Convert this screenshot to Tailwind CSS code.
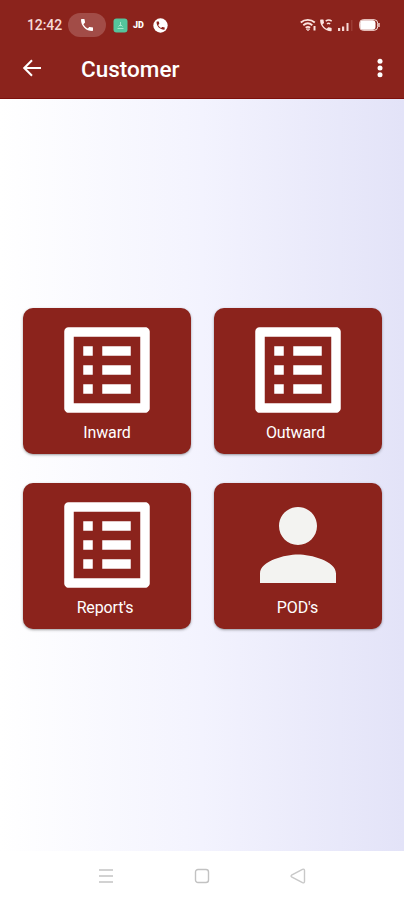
<!DOCTYPE html>
<html lang="en">

<head>
    <meta charset="UTF-8">
    <meta name="viewport" content="width=device-width, initial-scale=1.0">
    <title>Customer</title>
    <script src="https://cdn.jsdelivr.net/npm/@tailwindcss/browser@4"></script>
</head>

<body class="font-[Roboto,sans-serif]">
    <div class="h-[900px] w-[404px] flex flex-col overflow-hidden bg-white">
        <header class="h-[99px] shrink-0 bg-[#8b231c] border-b border-[#7d100c] text-white">
            <!-- Status bar -->
            <div class="h-[50px] pl-[27px] pr-[24px] flex items-center">
                <span class="w-[36px] text-[14px] leading-[20px] font-medium tracking-[-0.1px] whitespace-nowrap text-[#f6dcd8]">12:42</span>
                <span class="ml-[5px] w-[38px] h-[24px] rounded-full bg-[#a24c47] flex items-center justify-center">
                    <svg class="w-4 h-4" viewBox="0 0 24 24" fill="#fff"><path d="M6.62 10.79c1.44 2.83 3.76 5.14 6.59 6.59l2.2-2.2c.27-.27.67-.36 1.02-.24 1.12.37 2.33.57 3.57.57.55 0 1 .45 1 1V20c0 .55-.45 1-1 1C10.61 21 3 13.39 3 4c0-.55.45-1 1-1h3.5c.55 0 1 .45 1 1 0 1.25.2 2.45.57 3.57.11.35.03.74-.25 1.02l-2.2 2.2z"/></svg>
                </span>
                <svg class="ml-[7px] w-[15px] h-[15px]" viewBox="0 0 15 15"><rect x=".5" y=".5" width="14" height="14" rx="3" fill="#55c49c"/><path d="M7.5 4v4M5.5 8.500l2-2 2 2M4.500 10.500h6" stroke="#a5e8cd" fill="none"/></svg>
                <span class="ml-[5px] w-[12px] text-[9px] leading-none font-black">JD</span>
                <svg class="ml-[8px] w-[15px] h-[15px]" viewBox="0 0 24 24"><circle cx="12" cy="12" r="11.500" fill="#fff"/><path transform="translate(3.500 3.500) scale(.72)" fill="#8b231c" d="M6.620 10.790c1.440 2.830 3.760 5.140 6.590 6.590l2.200-2.200c.27-.27.67-.36 1.020-.24 1.120.37 2.330.57 3.570.57.55 0 1 .45 1 1V20c0 .55-.45 1-1 1C10.610 21 3 13.390 3 4c0-.55.45-1 1-1h3.500c.55 0 1 .45 1 1 0 1.250.2 2.450.57 3.570.11.35.03.74-.25 1.020l-2.200 2.200z"/></svg>
                <div class="ml-auto flex items-center">
                    <svg class="w-[17px] h-[14px]" viewBox="0 0 17 14" fill="none" stroke="#fbe3df" stroke-width="1.800"><path d="M.8 4.500c4-3.600 10-3.600 14 0M3.300 7.200c2.800-2.400 6.200-2.400 9 0M5.700 9.800c1.500-1.200 3-1.200 4.400 0"/><path d="M6.500 11h3L8 12.800z" stroke-width="1"/><path d="M14.500 8v4.500" stroke-width="2"/></svg>
                    <svg class="ml-[3px] w-[13px] h-[14px]" viewBox="0 0 13 14"><path transform="translate(-1.800 -.3) scale(.64)" fill="#fbe3df" d="M6.620 10.790c1.440 2.830 3.760 5.140 6.590 6.590l2.200-2.200c.27-.27.67-.36 1.020-.24 1.120.37 2.330.57 3.570.57.55 0 1 .45 1 1V20c0 .55-.45 1-1 1C10.610 21 3 13.390 3 4c0-.55.45-1 1-1h3.500c.55 0 1 .45 1 1 0 1.250.2 2.450.57 3.570.11.35.03.74-.25 1.020l-2.200 2.200z"/><path d="M5.700 3.200c2-1.500 4-1.500 6 0M7 5.800c1-.7 2-.7 3.200 0" stroke="#fbe3df" stroke-width="1.500" fill="none"/></svg>
                    <svg class="ml-[5px] w-[15px] h-[14px]" viewBox="0 0 15 14"><path d="M0 10h2.200v3H0zM4 8.500h2.200V13H4zM8.500 5h2v8h-2z" fill="#f6d8d4"/><path d="M13 2h1.500v11H13z" fill="#9b3b33"/></svg>
                    <svg class="ml-[6px] w-[21px] h-[12px]" viewBox="0 0 21 12"><rect x=".7" y=".7" width="18" height="10.600" rx="3.500" fill="none" stroke="#fbe3df"/><rect x="1.200" y="1.200" width="15.300" height="9.600" rx="3" fill="#fff"/><path d="M20 4v4" stroke="#fbe3df" stroke-width="1.300"/></svg>
                </div>
            </div>

            <!-- App bar -->
            <div class="h-[36px] pl-[21px] pr-[13px] flex items-center">
                <svg class="w-[22px] h-[24px]" viewBox="1 0 22 24" fill="#fff"><path d="M21 10.900H6.830l5.880-5.780L11.300 3.500 2.800 12l8.500 8.500 1.410-1.620L6.830 13.100H21z"/></svg>
                <h1 class="ml-[38px] pt-px text-[22.500px] leading-[26px] font-medium">Customer</h1>
                <svg class="ml-auto w-[22px] h-[24px]" viewBox="0 0 22 24" fill="#fff"><circle cx="11" cy="5.200" r="2.500"/><circle cx="11" cy="12" r="2.500"/><circle cx="11" cy="18.800" r="2.500"/></svg>
            </div>
        </header>

        <main class="flex-1 pt-[209px] px-[23px] bg-linear-to-r from-white via-[#f3f3fe] to-[#e3e3f8]">
            <div class="grid grid-cols-2 gap-x-[23px] gap-y-[29.400px] text-white text-[16px] leading-[20px] tracking-[-0.15px]">
                <a href="#" class="w-[168px] h-[146px] rounded-[10px] bg-[#8b231c] shadow-sm shadow-black/30 flex flex-col items-center pt-[4.500px]">
                    <svg class="w-[114px] h-[114px] shrink-0" viewBox="0 0 24 24" fill="#fff"><path d="M19 5v14H5V5h14m1.100-2H3.900c-.5 0-.9.4-.9.9v16.200c0 .4.4.9.9.9h16.200c.4 0 .9-.5.9-.9V3.900c0-.5-.5-.9-.9-.9zM11 7h6v2h-6V7zm0 4h6v2h-6v-2zm0 4h6v2h-6zM7 7h2v2H7zm0 4h2v2H7zm0 4h2v2H7z"/></svg>
                    <span class="-mt-[4px]">Inward</span>
                </a>
                <a href="#" class="w-[168px] h-[146px] rounded-[10px] bg-[#8b231c] shadow-sm shadow-black/30 flex flex-col items-center pt-[4.500px]">
                    <svg class="w-[114px] h-[114px] shrink-0" viewBox="0 0 24 24" fill="#fff"><path d="M19 5v14H5V5h14m1.100-2H3.900c-.5 0-.9.4-.9.9v16.200c0 .4.4.9.9.9h16.200c.4 0 .9-.5.9-.9V3.900c0-.5-.5-.9-.9-.9zM11 7h6v2h-6V7zm0 4h6v2h-6v-2zm0 4h6v2h-6zM7 7h2v2H7zm0 4h2v2H7zm0 4h2v2H7z"/></svg>
                    <span class="-mt-[4px] pr-[4px]">Outward</span>
                </a>
                <a href="#" class="w-[168px] h-[146px] rounded-[10px] bg-[#8b231c] shadow-sm shadow-black/30 flex flex-col items-center pt-[4.500px]">
                    <svg class="w-[114px] h-[114px] shrink-0" viewBox="0 0 24 24" fill="#fff"><path d="M19 5v14H5V5h14m1.100-2H3.900c-.5 0-.9.4-.9.9v16.200c0 .4.4.9.9.9h16.200c.4 0 .9-.5.9-.9V3.900c0-.5-.5-.9-.9-.9zM11 7h6v2h-6V7zm0 4h6v2h-6v-2zm0 4h6v2h-6zM7 7h2v2H7zm0 4h2v2H7zm0 4h2v2H7z"/></svg>
                    <span class="-mt-[4px] pr-[4px]">Report's</span>
                </a>
                <a href="#" class="w-[168px] h-[146px] rounded-[10px] bg-[#8b231c] shadow-sm shadow-black/30 flex flex-col items-center pt-[4.500px]">
                    <svg class="w-[114px] h-[114px] shrink-0" viewBox="0 0 24 24" fill="#f3f3f1"><path d="M12 12c2.210 0 4-1.790 4-4s-1.790-4-4-4-4 1.790-4 4 1.790 4 4 4zm0 2c-2.670 0-8 1.340-8 4v2h16v-2c0-2.660-5.330-4-8-4z"/></svg>
                    <span class="-mt-[4px]">POD's</span>
                </a>
            </div>
        </main>

        <!-- System navigation -->
        <nav class="h-[49px] shrink-0 bg-white flex items-center justify-between px-[98px]">
            <svg class="w-4 h-4" viewBox="0 0 16 16" stroke="#d2d2d2" stroke-width="2"><path d="M1 2h14M1 8h14M1 14h14"/></svg>
            <svg class="w-4 h-4" viewBox="0 0 16 16" fill="none" stroke="#c2c2c2" stroke-width="1.400"><rect x="1.500" y="1.500" width="13" height="13" rx="2.500"/></svg>
            <svg class="w-4 h-4" viewBox="0 0 16 16" fill="none" stroke="#c8c8c8" stroke-width="1.400" stroke-linejoin="round"><path d="M1.500 7.200 12.500 1.300q2-.6 2 1.200v11q0 1.800-2 1.200L1.500 8.800q-.8-.8 0-1.600z"/></svg>
        </nav>
    </div>
</body>

</html>
